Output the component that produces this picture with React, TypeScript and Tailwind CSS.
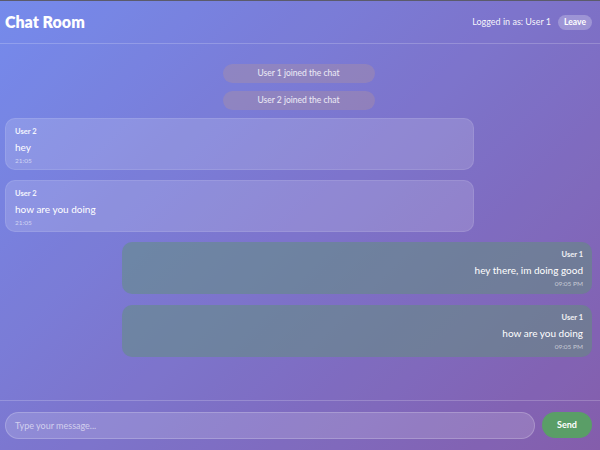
import React from "react";

type Msg =
  | { kind: "system"; text: string }
  | { kind: "other"; user: string; text: string; time: string }
  | { kind: "mine"; user: string; text: string; time: string };

const messages: Msg[] = [
  { kind: "system", text: "User 1 joined the chat" },
  { kind: "system", text: "User 2 joined the chat" },
  { kind: "other", user: "User 2", text: "hey", time: "21:05" },
  { kind: "other", user: "User 2", text: "how are you doing", time: "21:05" },
  { kind: "mine", user: "User 1", text: "hey there, im doing good", time: "09:05 PM" },
  { kind: "mine", user: "User 1", text: "how are you doing", time: "09:05 PM" },
];

export default function App() {
  return (
    <div
      className="h-[450px] w-[600px] overflow-hidden bg-[linear-gradient(135deg,#667eea_0%,#764ba2_100%)] text-white"
      style={{ fontFamily: "Lato, 'Noto Sans', sans-serif" }}
    >
      <div className="flex h-full flex-col border-t border-[#5b5b6b] bg-white/10">
        <header className="flex h-[43px] items-center justify-between border-b border-white/20 pl-[5px] pr-[8px]">
          <h1 className="text-[16px] font-extrabold leading-none">Chat Room</h1>
          <div className="flex items-center gap-[7px]">
            <span className="text-[9px] text-white/95">Logged in as: User 1</span>
            <button className="h-[15px] w-[34px] rounded-full bg-white/25 text-[8.5px] font-bold leading-none">
              Leave
            </button>
          </div>
        </header>

        <main className="flex-1 overflow-hidden pl-[5px] pr-[8px] pt-[20px]">
          {messages.map((m, i) => {
            if (m.kind === "system") {
              return (
                <div key={i} className="mb-[8px] flex justify-center">
                  <div className="flex h-[19px] w-[152px] items-center justify-center rounded-[10px] bg-[rgba(175,145,160,0.4)] text-[8.5px] text-white/85">
                    {m.text}
                  </div>
                </div>
              );
            }
            if (m.kind === "other") {
              return (
                <div key={i} className="mb-[10px] flex justify-start">
                  <div className="h-[52px] w-[469px] rounded-[10px] border border-white/10 bg-white/15 px-[9px] pt-[7px]">
                    <div className="text-[7.5px] font-bold leading-[11px] text-white/90">{m.user}</div>
                    <div className="mt-[3px] text-[10px] leading-[14px]">{m.text}</div>
                    <div className="mt-[2px] text-[6.5px] leading-[10px] text-white/60">{m.time}</div>
                  </div>
                </div>
              );
            }
            return (
              <div key={i} className="mb-[11px] flex justify-end">
                <div className="h-[52px] w-[470px] rounded-[10px] bg-[rgba(95,145,120,0.5)] px-[9px] pt-[7px] text-right">
                  <div className="text-[7.5px] font-bold leading-[11px] text-white/90">{m.user}</div>
                  <div className="mt-[3px] text-[10px] leading-[14px]">{m.text}</div>
                  <div className="mt-[2px] text-[6.5px] leading-[10px] text-white/60">{m.time}</div>
                </div>
              </div>
            );
          })}
        </main>

        <footer className="flex h-[50px] items-start gap-[7px] border-t border-white/20 pl-[5px] pr-[8px] pt-[11px]">
          <div className="flex h-[27px] flex-1 items-center rounded-full border border-white/20 bg-white/15 px-[9px]">
            <span className="text-[9px] text-white/60">Type your message...</span>
          </div>
          <button className="h-[26px] w-[50px] rounded-full bg-[#5a9e67] text-[9px] font-bold">Send</button>
        </footer>
      </div>
    </div>
  );
}
